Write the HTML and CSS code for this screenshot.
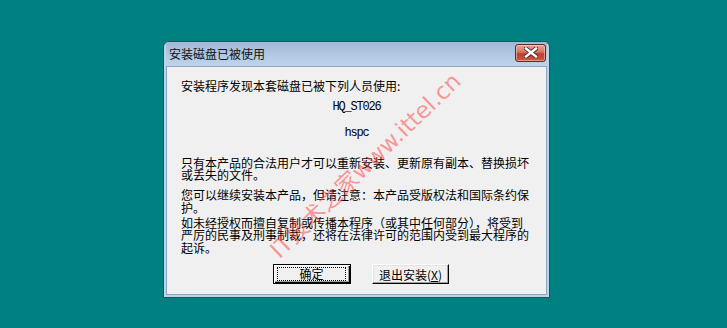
FILE: index.html
```html
<!DOCTYPE html>
<html lang="zh-CN">
<head>
    <meta charset="UTF-8">
    <title>安装磁盘已被使用</title>
    <link rel="stylesheet" href="styles.css">
</head>
<body>
    <div class="desktop">
        <div class="dialog">
            <div class="titlebar">
                <span class="title">安装磁盘已被使用</span>
                <button class="close" type="button">
                    <svg width="14" height="11" viewBox="0 0 14 11">
                        <path d="M2 1.5 L12 9.5 M12 1.5 L2 9.5" stroke="#4a2a24" stroke-width="4.2" stroke-linecap="square"/>
                        <path d="M2 1.5 L12 9.5 M12 1.5 L2 9.5" stroke="#ffffff" stroke-width="2.4" stroke-linecap="square"/>
                    </svg>
                </button>
            </div>
            <div class="client">
                <p class="line">安装程序发现本套磁盘已被下列人员使用:</p>
                <p class="user name">HQ_ST026</p>
                <p class="user org">hspc</p>
                <p class="para p1">只有本产品的合法用户才可以重新安装、更新原有副本、替换损坏或丢失的文件。</p>
                <p class="para p2">您可以继续安装本产品，但请注意：本产品受版权法和国际条约保护。</p>
                <p class="para p3">如未经授权而擅自复制或传播本程序（或其中任何部分），将受到严厉的民事及刑事制裁，还将在法律许可的范围内受到最大程序的起诉。</p>
                <div class="buttons">
                    <button class="btn default" type="button"><span class="focus">确定</span></button>
                    <button class="btn" type="button">退出安装(<u>X</u>)</button>
                </div>
            </div>
            <div class="watermark">IT技术之家www.ittel.cn</div>
        </div>
    </div>
</body>
</html>
```

FILE: styles.css
```css
body {
    margin: 0;
    background-color: #008080;
    font-family: "Noto Sans CJK SC", "DejaVu Sans", sans-serif;
    font-size: 12px;
    color: #000;
}
.desktop {
    padding: 41px 0 0 163px;
    height: 287px;
}
.dialog {
    position: relative;
    width: 381px;
    height: 253px;
    border: 1px solid #34475c;
    border-radius: 6px 6px 0 0;
    padding: 0 2px 2px;
    background-color: #bed3ea;
    overflow: hidden;
}
.titlebar {
    height: 24px;
    display: flex;
    align-items: center;
    justify-content: space-between;
    background: linear-gradient(#9fb9d6, #b7cde6 70%, #bfd4ea);
    padding: 0 1px 0 3px;
}
.title {
    color: #111;
    font-size: 12px;
    margin-top: -1px;
}
.close {
    width: 31px;
    height: 18px;
    margin-top: -3px;
    padding: 0;
    border: 1px solid #5b2d25;
    border-radius: 3px;
    background: linear-gradient(#e7a596, #d3725f 45%, #bb3f2b 55%, #c65a43);
    box-shadow: inset 0 0 0 1px rgba(255, 220, 210, 0.5);
    display: flex;
    align-items: center;
    justify-content: center;
}
.client {
    border: 1px solid #8aa6c6;
    background-color: #f0f0f0;
    padding: 13px 0 0 14px;
    box-sizing: border-box;
    height: 229px;
}
.client p {
    margin: 0;
    line-height: 12.5px;
}
.user {
    text-align: center;
    padding-right: 14px;
    font-family: "Liberation Mono", monospace;
    font-size: 12px;
    letter-spacing: -1.2px;
}
.name {
    margin-top: 8.5px !important;
}
.org {
    margin-top: 13.5px !important;
}
.para {
    width: 350px;
}
.p1 {
    margin-top: 17px !important;
}
.p2 {
    margin-top: 7.5px !important;
}
.p3 {
    margin-top: 2.5px !important;
}
.buttons {
    display: flex;
    gap: 21px;
    margin: 10px 0 0 92px;
}
.btn {
    width: 77px;
    height: 20px;
    padding: 0;
    font-family: "Noto Sans CJK SC", "DejaVu Sans", sans-serif;
    font-size: 12px;
    color: #000;
    background-color: #f0f0f0;
    border: 1px solid;
    border-color: #fff #000 #000 #fff;
    box-shadow: inset -1px -1px 0 #a0a0a0, inset 1px 1px 0 #e3e3e3;
    display: flex;
    align-items: center;
    justify-content: center;
}
.btn.default {
    width: 78px;
    border: 1px solid #000;
    box-shadow: inset 1px 1px 0 #fff, inset -1px -1px 0 #000, inset -2px -2px 0 #a0a0a0;
}
.focus {
    flex: 1;
    margin: 0 4px 0 3px;
    height: 12px;
    line-height: 12px;
    border: 1px dotted #000;
    text-align: center;
}
.btn u {
    text-decoration-thickness: 1px;
    text-underline-offset: 1px;
}
.watermark {
    position: absolute;
    left: 200px;
    top: 122px;
    transform: translate(-50%, -50%) rotate(-44deg);
    white-space: nowrap;
    color: rgba(255, 60, 60, 0.5);
    font-family: "DejaVu Sans", "Noto Sans CJK SC", sans-serif;
    font-size: 23px;
    pointer-events: none;
}
```
